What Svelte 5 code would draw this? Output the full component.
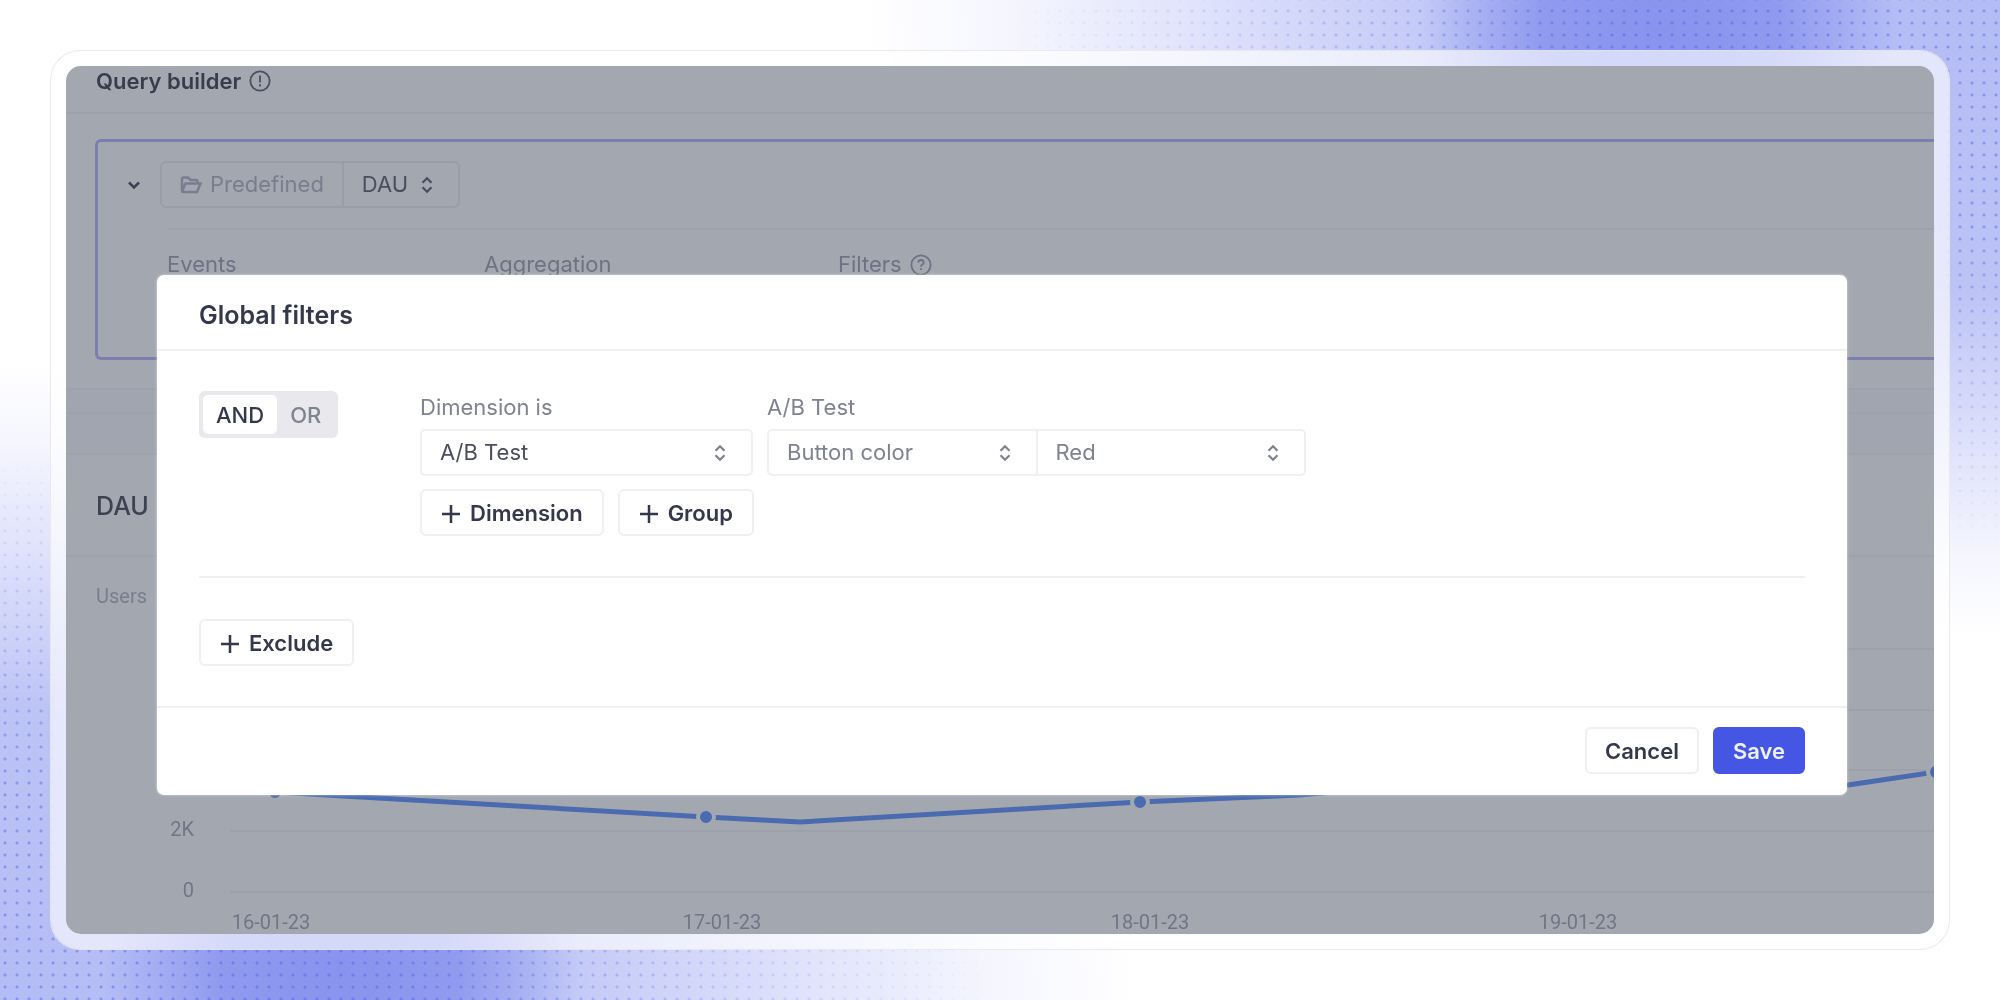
<script lang="ts">
  type Operator = "AND" | "OR";

  let operator = $state<Operator>("AND");
  let dimension = $state("A/B Test");
  let testName = $state("Button color");
  let testValue = $state("Red");
  let metric = $state("DAU");

  const gridLines = [40, 101, 161, 222, 283];

  const yLabels = [
    { text: "2K", y: 227 },
    { text: "0", y: 288 },
  ];

  const xLabels = [
    { text: "16-01-23", x: 205 },
    { text: "17-01-23", x: 656 },
    { text: "18-01-23", x: 1084 },
    { text: "19-01-23", x: 1512 },
  ];

  const line = [
    [209, 183],
    [640, 208],
    [734, 213],
    [1074, 193],
    [1234, 186],
    [1300, 180],
    [1700, 180],
    [1782, 176],
    [1870, 163],
  ];

  const points = [line[0], line[1], line[3], line[8]];
</script>

{#snippet sorter()}
  <svg class="sorter" viewBox="0 0 14 20" aria-hidden="true">
    <path d="M2 7.5 7 2.5l5 5M2 12.5l5 5 5-5" />
  </svg>
{/snippet}

{#snippet plus()}
  <svg class="plus" viewBox="0 0 20 20" aria-hidden="true">
    <path d="M10 1v18M1 10h18" />
  </svg>
{/snippet}

<div class="page">
  <div class="frame">
    <div class="screen">
      <main class="dashboard">
        <header class="topbar">
          <h1>Query builder</h1>
          <svg class="hint dark" viewBox="0 0 24 24" aria-hidden="true">
            <circle cx="12" cy="12" r="10.5" />
            <path d="M12 6v7.5M12 15.5v2.5" />
          </svg>
        </header>

        <section class="query">
          <div class="query-card">
            <div class="query-row">
              <svg class="caret" viewBox="0 0 16 16" aria-hidden="true">
                <path d="M3 5.5l5 5 5-5" />
              </svg>
              <div class="metric">
                <span class="metric-type">
                  <svg class="folder" viewBox="0 0 22 20" aria-hidden="true">
                    <path d="M2 16V4q0-1.5 1.500-1.500H8l2.500 2.500H16q1.500 0 1.500 1.500V8.500M2 16.500 5.500 8.500H20.500L17 17H3q-1 0-1-1" />
                  </svg>
                  Predefined
                </span>
                <label class="metric-value">
                  <select aria-label="Metric" bind:value={metric}>
                    <option>DAU</option>
                  </select>
                  {@render sorter()}
                </label>
              </div>
            </div>
            <div class="columns">
              <span>Events</span>
              <span>Aggregation</span>
              <span class="with-hint">
                Filters
                <svg class="hint" viewBox="0 0 24 24" aria-hidden="true">
                  <circle cx="12" cy="12" r="10.5" />
                  <path d="M9 9.5q0-3 3-3t3 2.700q0 1.600-1.700 2.400-1.300.7-1.300 2.200M12 15.500v2" />
                </svg>
              </span>
            </div>
          </div>
        </section>

        <div class="strip"></div>

        <section class="widget">
          <h2>DAU</h2>
          <p class="unit">Users</p>
          <svg class="chart" viewBox="0 0 1868 325" role="img" aria-label="DAU chart">
            {#each gridLines as y}
              <line class="grid" x1="164" x2="1868" y1={y} y2={y} />
            {/each}
            {#each yLabels as label}
              <text x="128" y={label.y} text-anchor="end">{label.text}</text>
            {/each}
            {#each xLabels as label}
              <text x={label.x} y="320" text-anchor="middle">{label.text}</text>
            {/each}
            <polyline points={line.map((p) => p.join(",")).join(" ")} />
            {#each points as [x, y]}
              <circle cx={x} cy={y} r="8" />
            {/each}
          </svg>
        </section>
      </main>

      <div class="overlay">
        <div class="modal" role="dialog" aria-modal="true" aria-labelledby="modal-title">
          <header class="modal-header">
            <h2 id="modal-title">Global filters</h2>
          </header>

          <div class="modal-body">
            <div class="include">
              <div class="operator">
                <button class:active={operator === "AND"} onclick={() => (operator = "AND")}>AND</button>
                <button class:active={operator === "OR"} onclick={() => (operator = "OR")}>OR</button>
              </div>

              <div class="conditions">
                <div class="fields">
                  <div class="field">
                    <label for="dimension">Dimension is</label>
                    <div class="control dimension">
                      <div class="picker strong">
                        <select id="dimension" bind:value={dimension}>
                          <option>A/B Test</option>
                        </select>
                        {@render sorter()}
                      </div>
                    </div>
                  </div>
                  <div class="field">
                    <label for="test-name">A/B Test</label>
                    <div class="control test">
                      <div class="picker">
                        <select id="test-name" bind:value={testName}>
                          <option>Button color</option>
                        </select>
                        {@render sorter()}
                      </div>
                      <div class="picker">
                        <select aria-label="Test value" bind:value={testValue}>
                          <option>Red</option>
                        </select>
                        {@render sorter()}
                      </div>
                    </div>
                  </div>
                </div>
                <div class="actions">
                  <button class="btn">{@render plus()}Dimension</button>
                  <button class="btn">{@render plus()}Group</button>
                </div>
              </div>
            </div>

            <div class="exclude">
              <button class="btn">{@render plus()}Exclude</button>
            </div>
          </div>

          <footer class="modal-footer">
            <button class="btn">Cancel</button>
            <button class="btn primary">Save</button>
          </footer>
        </div>
      </div>
    </div>
  </div>
</div>

<style>
  :global(body) {
    margin: 0;
  }

  .page {
    --text: #35384a;
    --muted: #7f8290;
    --border: #f0f0f3;
    position: relative;
    box-sizing: border-box;
    min-height: 100vh;
    padding: 50px;
    display: flex;
    overflow: hidden;
    font-family: Inter, "Liberation Sans", sans-serif;
    font-size: 22px;
    line-height: 29px;
    color: var(--text);
    background:
      radial-gradient(ellipse 240px 200px at 83% 3%, rgba(126, 139, 236, 0.85) 0%, rgba(126, 139, 236, 0.7) 50%, rgba(126, 139, 236, 0) 100%),
      radial-gradient(ellipse 240px 200px at 17% 97%, rgba(126, 139, 236, 0.85) 0%, rgba(126, 139, 236, 0.7) 50%, rgba(126, 139, 236, 0) 100%),
      radial-gradient(ellipse 57% 64% at 100% 0, #b4bcf5 0%, #bcc3f5 45%, #dfe2fb 70%, #f6f7fe 88%, rgba(255, 255, 255, 0) 100%),
      radial-gradient(ellipse 57% 64% at 0 100%, #b4bcf5 0%, #bcc3f5 45%, #dfe2fb 70%, #f6f7fe 88%, rgba(255, 255, 255, 0) 100%),
      #fff;
  }

  .page::before,
  .page::after {
    content: "";
    position: absolute;
    inset: 0;
    background-image: radial-gradient(circle at 6px 6px, rgba(72, 84, 236, 0.4) 1px, rgba(72, 84, 236, 0) 2px);
    background-size: 12px 12px;
  }

  .page::before {
    background-position: 10px 5px;
    mask-image: radial-gradient(ellipse 50% 55% at 100% 0, #000 40%, transparent 100%);
  }

  .page::after {
    background-position: 11px 9px;
    mask-image: radial-gradient(ellipse 50% 55% at 0 100%, #000 40%, transparent 100%);
  }

  .frame {
    position: relative;
    z-index: 1;
    flex: 1;
    min-width: 0;
    display: flex;
    padding: 15px;
    border: 1px solid rgba(232, 232, 236, 0.9);
    border-radius: 30px;
    background: rgba(255, 255, 255, 0.64);
    background-clip: padding-box;
    backdrop-filter: blur(6px);
  }

  .screen {
    position: relative;
    flex: 1;
    min-width: 0;
    overflow: hidden;
    border-radius: 15px;
    background: #fff;
  }

  h1,
  h2,
  p {
    margin: 0;
  }

  button,
  select {
    font: inherit;
    color: inherit;
    cursor: pointer;
  }

  svg {
    flex: none;
    fill: none;
    stroke: currentColor;
    stroke-width: 2;
  }

  /* dashboard */

  .dashboard {
    --line: #f3f4f6;
    color: #474d59;
  }

  .topbar {
    display: flex;
    align-items: center;
    gap: 8px;
    height: 30px;
    padding: 0 30px 16px;
    border-bottom: 2px solid var(--line);
  }

  h1 {
    font-size: 22px;
    font-weight: 600;
    color: #262a36;
  }

  .hint {
    width: 22px;
    height: 22px;
  }

  .hint.dark {
    color: #4b5162;
  }

  .query {
    padding: 25px 0 28px 29px;
    border-bottom: 2px solid var(--line);
  }

  .query-card {
    box-sizing: border-box;
    min-height: 221px;
    padding: 19px 0 0 28px;
    border: 3px solid #adaeff;
    border-right: none;
    border-radius: 6px 0 0 6px;
  }

  .query-row {
    display: flex;
    align-items: center;
    gap: 18px;
  }

  .caret {
    width: 16px;
    height: 16px;
    color: #2d3240;
    stroke-width: 2.5;
  }

  .metric {
    display: flex;
    border: 2px solid #e8eaed;
    border-radius: 6px;
  }

  .metric-type {
    display: flex;
    align-items: center;
    gap: 8px;
    padding: 7px 18px;
    border-right: 2px solid #e8eaed;
    color: #a7adbc;
  }

  .folder {
    width: 22px;
    height: 20px;
    stroke-width: 2.5;
  }

  .metric-value {
    position: relative;
    width: 114px;
    display: flex;
    align-items: center;
  }

  .columns {
    display: grid;
    grid-template-columns: 317px 354px 1fr;
    margin: 20px 0 0 41px;
    padding-top: 20px;
    border-top: 2px solid var(--line);
    color: #9097a6;
  }

  .with-hint {
    display: flex;
    align-items: center;
    gap: 8px;
  }

  .strip {
    height: 42px;
    padding-top: 21px;
    background: linear-gradient(var(--line), var(--line)) 0 22px / 100% 2px no-repeat #fbfbfc;
  }

  .widget {
    border-top: 2px solid var(--line);
  }

  .widget h2 {
    padding: 37px 30px 34px;
    border-bottom: 2px solid var(--line);
    font-size: 25px;
    font-weight: 500;
    color: #2f3442;
  }

  .unit {
    padding: 26px 30px 0;
    font-family: Roboto, sans-serif;
    font-size: 20px;
    line-height: 26px;
    color: #a3acbc;
  }

  .chart {
    display: block;
    width: 100%;
    margin-bottom: -1px;
    overflow: visible;
  }

  .chart text {
    fill: #969dab;
    stroke: none;
    font-family: Roboto, sans-serif;
    font-size: 20px;
  }

  .chart polyline {
    stroke: #4d86ff;
    stroke-width: 5;
    stroke-linejoin: round;
  }

  .chart circle {
    fill: #4d86ff;
    stroke: #fff;
    stroke-width: 4;
  }

  .grid {
    stroke: #f1f2f4;
  }

  /* pickers */

  select {
    width: 100%;
    margin: 0;
    padding: 7px 44px 7px 18px;
    border: none;
    outline: none;
    appearance: none;
    background: transparent;
  }

  .sorter {
    position: absolute;
    right: 24px;
    width: 14px;
    height: 18px;
    pointer-events: none;
    stroke-width: 2.5;
  }

  .picker {
    position: relative;
    flex: 1;
    display: flex;
    align-items: center;
    color: var(--muted);
  }

  .picker + .picker {
    border-left: 2px solid var(--border);
  }

  .picker.strong select {
    color: #4b4e5e;
  }

  .control {
    display: flex;
    box-sizing: border-box;
    border: 2px solid var(--border);
    border-radius: 5px;
  }

  .control.dimension {
    width: 333px;
  }

  .control.test {
    width: 539px;
  }

  /* modal */

  .overlay {
    position: absolute;
    inset: 0;
    padding: 209px 87px 0 91px;
    background: rgba(71, 80, 97, 0.5);
  }

  .modal {
    border-radius: 7px;
    background: #fff;
    box-shadow: 0 0 3px rgba(255, 255, 255, 0.6);
  }

  .modal-header {
    padding: 26px 42px 19px;
    border-bottom: 2px solid var(--border);
  }

  .modal-header h2 {
    font-size: 25px;
    font-weight: 600;
  }

  .modal-body {
    padding: 0 42px;
  }

  .include {
    display: grid;
    grid-template-columns: 221px 1fr;
    padding: 40px 0;
    border-bottom: 2px solid var(--border);
  }

  .operator {
    justify-self: start;
    align-self: start;
    display: flex;
    padding: 4px;
    border-radius: 6px;
    background: #e8e8ed;
  }

  .operator button {
    padding: 6px 13px 4px;
    border: none;
    border-radius: 5px;
    background: transparent;
    font-weight: 500;
    color: var(--muted);
  }

  .operator button.active {
    background: #fff;
    color: var(--text);
  }

  .fields {
    display: flex;
    gap: 14px;
  }

  .field {
    display: flex;
    flex-direction: column;
    gap: 7px;
  }

  .field label {
    padding-top: 2px;
    color: var(--muted);
  }

  .actions {
    display: flex;
    gap: 14px;
    margin-top: 13px;
  }

  .btn {
    display: flex;
    align-items: center;
    gap: 9px;
    padding: 8px 19px 6px;
    border: 2px solid var(--border);
    border-radius: 6px;
    background: #fff;
    font-weight: 600;
  }

  .plus {
    width: 20px;
    height: 20px;
    stroke-width: 2.5;
  }

  .btn.primary {
    border-color: #4656e4;
    background: #4656e4;
    color: #eef0ff;
  }

  .exclude {
    padding: 41px 0 40px;
  }

  .modal-footer {
    display: flex;
    justify-content: flex-end;
    gap: 14px;
    padding: 19px 42px 21px;
    border-top: 2px solid var(--border);
  }

  .modal-footer .btn {
    padding-inline: 18px;
  }
</style>
